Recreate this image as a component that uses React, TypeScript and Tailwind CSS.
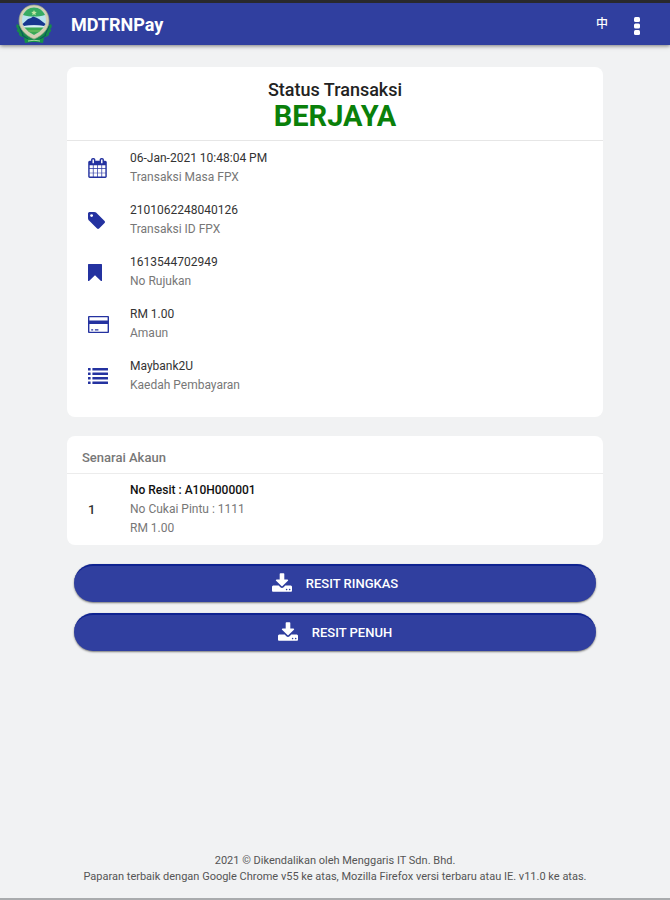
import * as React from "react";

type IconProps = { className?: string };

function CalendarIcon({ className }: IconProps) {
  return (
    <svg viewBox="64 0 1664 1792" className={className} fill="currentColor" aria-hidden="true">
      <path d="M192 1664h288v-288h-288v288zm352 0h320v-288h-320v288zm-352-352h288v-320h-288v320zm352 0h320v-320h-320v320zm-352-384h288v-288h-288v288zm736 736h320v-288h-320v288zm-384-736h320v-288h-320v288zm768 736h288v-288h-288v288zm-384-352h320v-320h-320v320zm-352-864v-288q0-13-9.5-22.5t-22.5-9.5h-64q-13 0-22.5 9.5t-9.5 22.5v288q0 13 9.5 22.5t22.5 9.5h64q13 0 22.5-9.5t9.5-22.5zm736 864h288v-320h-288v320zm-384-384h320v-288h-320v288zm384 0h288v-288h-288v288zm32-480v-288q0-13-9.5-22.5t-22.5-9.5h-64q-13 0-22.5 9.5t-9.5 22.5v288q0 13 9.5 22.5t22.5 9.5h64q13 0 22.5-9.5t9.5-22.5zm384-64v1280q0 52-38 90t-90 38h-1408q-52 0-90-38t-38-90v-1280q0-52 38-90t90-38h128v-96q0-66 47-113t113-47h64q66 0 113 47t47 113v96h384v-96q0-66 47-113t113-47h64q66 0 113 47t47 113v96h128q52 0 90 38t38 90z" />
    </svg>
  );
}

function TagIcon({ className }: IconProps) {
  return (
    <svg viewBox="128 128 1515 1515" className={className} fill="currentColor" aria-hidden="true">
      <path d="M576 448q0-53-37.5-90.5t-90.5-37.5-90.5 37.5-37.5 90.5 37.5 90.5 90.5 37.5 90.5-37.5 37.5-90.5zm1067 576q0 53-37 90l-491 492q-39 37-91 37-53 0-90-37l-715-716q-38-37-64.5-101t-26.5-117v-416q0-52 38-90t90-38h416q53 0 117 26.5t102 64.5l715 714q37 39 37 91z" />
    </svg>
  );
}

function BookmarkIcon({ className }: IconProps) {
  return (
    <svg viewBox="0 0 14 17" className={className} fill="currentColor" aria-hidden="true">
      <path d="M.6 0h12.8q.6 0 .6.6v15.8q0 .6-.6.6-.4 0-.7-.3L7 11.3l-5.7 5.4q-.3.3-.7.3-.6 0-.6-.6V.6Q0 0 .6 0z" />
    </svg>
  );
}

function CardIcon({ className }: IconProps) {
  return (
    <svg viewBox="0 128 1920 1536" className={className} fill="currentColor" aria-hidden="true">
      <path d="M1840 128q80 0 80 80v1376q0 80-80 80h-1760q-80 0-80-80v-1376q0-80 80-80h1760zm-1712 110v290h1664v-290h-1664zm1664 1320v-710h-1664v710h1664zm-1500-120v-100h180v100h-180zm340 0v-100h320v100h-320z" />
    </svg>
  );
}

function ListIcon({ className }: IconProps) {
  return (
    <svg viewBox="0 0 20 16" className={className} fill="currentColor" aria-hidden="true">
      {[0, 4.5, 9, 13.5].map((y) => (
        <React.Fragment key={y}>
          <rect x="0" y={y} width="2.6" height="2.5" rx=".3" />
          <rect x="4.4" y={y} width="15.6" height="2.5" rx=".3" />
        </React.Fragment>
      ))}
    </svg>
  );
}

function DownloadIcon({ className }: IconProps) {
  return (
    <svg viewBox="0 0 1664 1536" className={className} fill="currentColor" aria-hidden="true">
      <path d="M1280 1344q0-26-19-45t-45-19-45 19-19 45 19 45 45 19 45-19 19-45zm256 0q0-26-19-45t-45-19-45 19-19 45 19 45 45 19 45-19 19-45zm128-224v320q0 40-28 68t-68 28h-1472q-40 0-68-28t-28-68v-320q0-40 28-68t68-28h465l135 136q58 56 136 56t136-56l136-136h464q40 0 68 28t28 68zm-325-569q17 41-14 70l-448 448q-18 19-45 19t-45-19l-448-448q-31-29-14-70 17-39 59-39h256v-448q0-26 19-45t45-19h256q26 0 45 19t19 45v448h256q42 0 59 39z" />
    </svg>
  );
}

function CouncilLogo({ className }: IconProps) {
  return (
    <svg viewBox="0 0 38 40" className={className} role="img" aria-label="MDTRNPay">
      {/* leaves */}
      <path d="M2 20q-2 3 1 5-3 1 1 4-1 3 4 4l5 3 12 0 5-3q5-1 4-4 4-3 1-4 3-2 1-5l-5 3H7z" fill="#178a4c" />
      <path d="M4 22l4 9M34 22l-4 9M7 31l6 4M31 31l-6 4" stroke="#0b5f5a" strokeWidth="1.2" />
      {/* ribbon */}
      <path d="M9 34q10 4 20 0l-1 5q-9-2-18 0z" fill="#159447" />
      <path d="M13 37q6-1.500 12 0" stroke="#a5d9a0" strokeWidth="1" fill="none" />
      {/* shield */}
      <path d="M19 1C10 1 4 8 4 17c0 8 7 15 15 18 8-3 15-10 15-18C34 8 28 1 19 1z" fill="#d3d0b4" stroke="#98a687" strokeWidth=".7" />
      <path d="M19 3.500C12 3.500 7 9 7 16.500c0 6.500 6 11.500 12 14.500 6-3 12-8 12-14.500C31 9 26 3.500 19 3.500z" fill="#b9e3ee" />
      <path d="M19 3.500c-5 0-9 3-11 7.500 7 2 15 2 22 0C28 6.500 24 3.500 19 3.500z" fill="#36ab62" />
      <path d="M19 6l.8 1.800 2 .2-1.500 1.300.5 2-1.800-1.100-1.800 1.100.5-2L16.200 8l2-.2z" fill="#c4e7a4" />
      <path d="M7.500 20l5.500-5 3-1 2-1.500 3 1 3 1.500 6.500 5q-1 1.500-1.500 2-10-1.500-20 0z" fill="#17368f" />
      <path d="M9 22q10-1.500 20 0l-.5 1.500h-19z" fill="#d9eef4" />
      <path d="M9.300 23.500h19.400q-3.700 4.500-9.700 7.500-6-3-9.700-7.500z" fill="#3ca953" />
      <path d="M13 27h12" stroke="#7cc463" strokeWidth="1" />
    </svg>
  );
}

const details = [
  { label: "Transaksi Masa FPX", value: "06-Jan-2021 10:48:04 PM", icon: <CalendarIcon className="h-5 w-[19px]" /> },
  { label: "Transaksi ID FPX", value: "2101062248040126", icon: <TagIcon className="size-[17px]" /> },
  { label: "No Rujukan", value: "1613544702949", icon: <BookmarkIcon className="h-[17px] w-[14px]" /> },
  { label: "Amaun", value: "RM 1.00", icon: <CardIcon className="h-[17px] w-[21px]" /> },
  { label: "Kaedah Pembayaran", value: "Maybank2U", icon: <ListIcon className="h-4 w-5" /> },
];

const accounts = [{ receipt: "A10H000001", doorTax: "1111", amount: "RM 1.00" }];

const receipts = ["RESIT RINGKAS", "RESIT PENUH"];

export default function App() {
  return (
    <div className="flex min-h-screen flex-col border-b-2 border-[#a9abad] bg-[#f1f2f3] font-['Roboto','Noto_Sans_CJK_SC',sans-serif] text-[12px] text-[#333]">
      <header className="flex h-[45px] items-center border-t-3 border-[#29292c] bg-[#303f9f] px-[15px] text-white shadow-[0_1px_4px_rgba(0,0,0,0.5)]">
        <CouncilLogo className="h-10 w-[38px]" />
        <h1 className="ml-[18px] text-[18px] font-bold">MDTRNPay</h1>
        <div className="ml-auto flex items-center gap-[11px] pr-[6px]">
          <button className="w-6 text-[12px] font-medium">中</button>
          <button aria-label="Menu" className="flex w-6 justify-center pt-1">
            <svg viewBox="0 0 6 18" className="h-[18px] w-[6px]" fill="currentColor" aria-hidden="true">
              <rect width="6" height="5" rx="1.500" />
              <rect y="6.500" width="6" height="5" rx="1.500" />
              <rect y="13" width="6" height="5" rx="1.500" />
            </svg>
          </button>
        </div>
      </header>

      <main className="mx-auto mt-[22px] w-4/5">
        {/* Transaction status */}
        <section className="rounded-lg bg-white pb-[22px]">
          <div className="border-b border-[#e6e6e6] pt-3 pb-2 text-center">
            <h2 className="text-[18px] leading-[22px] font-medium text-[#222]">Status Transaksi</h2>
            <p className="text-[29px] leading-[31px] font-bold text-[#0a800a]">BERJAYA</p>
          </div>
          <dl className="flex flex-col gap-[14px] pt-2">
            {details.map((item) => (
              <div key={item.label} className="flex items-center pl-[21px]">
                <span className="w-[42px] text-[#2432a0]">{item.icon}</span>
                <div className="flex flex-col-reverse leading-[19px]">
                  <dt className="text-[#777]">{item.label}</dt>
                  <dd>{item.value}</dd>
                </div>
              </div>
            ))}
          </dl>
        </section>

        {/* Account list */}
        <section className="mt-[19px] rounded-lg bg-white">
          <h2 className="border-b border-[#ececec] px-[15px] pt-3 pb-[6px] text-[13px] leading-[19px] font-medium text-[#777]">
            Senarai Akaun
          </h2>
          <ol className="py-[7px]">
            {accounts.map((account, i) => (
              <li key={account.receipt} className="flex items-center pl-[21px]">
                <span className="w-[42px] text-[13px] font-medium">{i + 1}</span>
                <div className="leading-[19px] text-[#777]">
                  <p className="font-medium text-[#111]">No Resit : {account.receipt}</p>
                  <p>No Cukai Pintu : {account.doorTax}</p>
                  <p>{account.amount}</p>
                </div>
              </li>
            ))}
          </ol>
        </section>

        {/* Receipt downloads */}
        <div className="mt-[19px] flex flex-col gap-[11px] px-[7px]">
          {receipts.map((label) => (
            <button
              key={label}
              className="flex h-[38px] items-center justify-center gap-[14px] rounded-full border-t-2 border-[#0f2390] bg-[#303f9f] text-[13px] font-medium text-white shadow-[0_1px_2px_rgba(0,0,0,0.5)]"
            >
              <DownloadIcon className="mb-1 h-[19px] w-5" />
              {label}
            </button>
          ))}
        </div>
      </main>

      <footer className="mt-auto px-4 pt-8 pb-[13px] text-center text-[11px] leading-4 text-[#555]">
        <p>2021 © Dikendalikan oleh Menggaris IT Sdn. Bhd.</p>
        <p>Paparan terbaik dengan Google Chrome v55 ke atas, Mozilla Firefox versi terbaru atau IE. v11.0 ke atas.</p>
      </footer>
    </div>
  );
}
